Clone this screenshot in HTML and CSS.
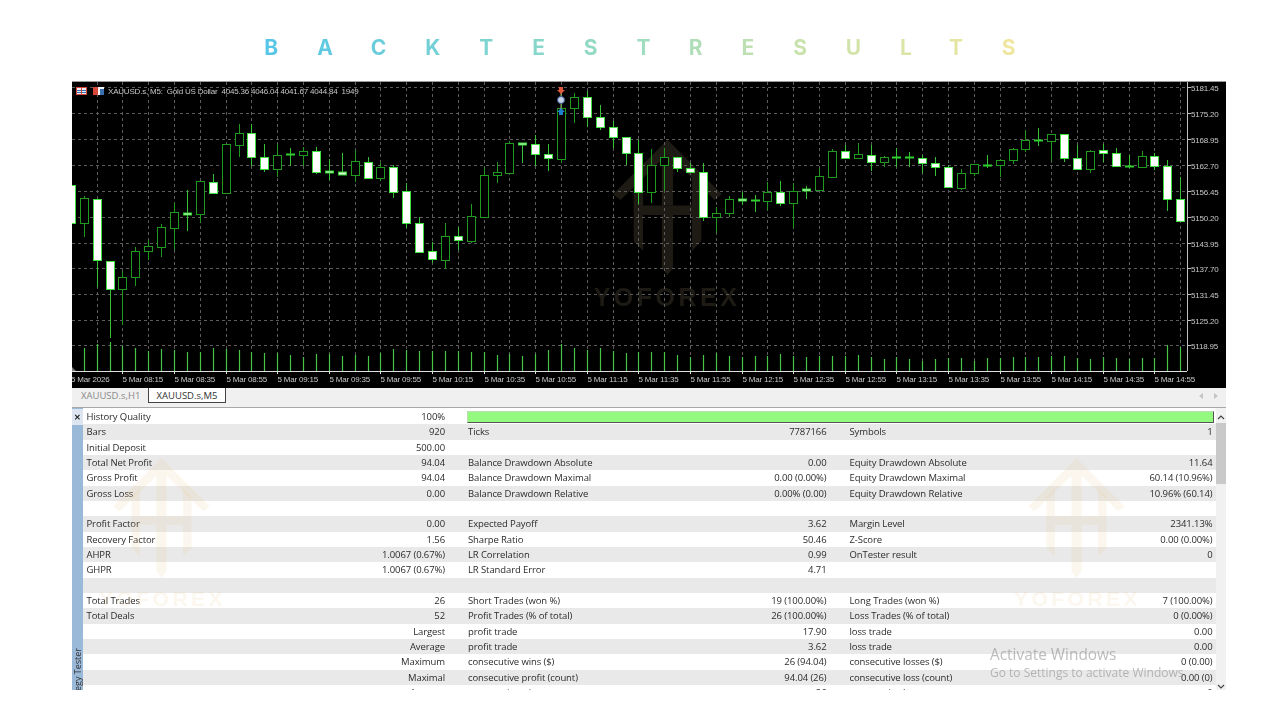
FILE: index.html
```html
<!DOCTYPE html>
<html lang="en">

<head>
    <meta charset="UTF-8">
    <meta name="viewport" content="width=device-width, initial-scale=1.0">
    <title>Backtest Results</title>
    <link rel="stylesheet" href="styles.css">
</head>

<body>
    <svg class="defs" aria-hidden="true">
        <symbol id="logo" viewBox="0 0 290 360">
            <polygon points="145,0 290,145 270,160 145,38 20,160 0,145" />
            <polygon points="55,115 80,90 80,175 210,175 210,90 235,115 235,270 210,295 210,200 160,200 160,340 145,360 130,340 130,200 80,200 80,295 55,270" />
            <polygon points="130,50 145,38 160,50 160,175 130,175" />
        </symbol>
    </svg>

    <h1 class="title"><span>BACKTEST RESULTS</span></h1>

    <div class="terminal">
        <div class="chart" id="chart"></div>

        <div class="tabs">
            <span class="tab">XAUUSD.s,H1</span>
            <span class="tab active">XAUUSD.s,M5</span>
            <span class="tab-arrows">
                <svg width="4" height="6" viewBox="0 0 4 6"><polygon points="4,0 0,3 4,6" /></svg>
                <svg width="4" height="6" viewBox="0 0 4 6"><polygon points="0,0 4,3 0,6" /></svg>
            </span>
        </div>

        <div class="tester">
            <div class="strip">
                <span class="close">&#10005;</span>
                <span class="strip-label">Strategy Tester</span>
            </div>

            <div class="report">
                <div class="row">
                    <div class="cell"><span>History Quality</span><span>100%</span></div>
                    <div class="quality"></div>
                </div>
                <div class="row">
                    <div class="cell"><span>Bars</span><span>920</span></div>
                    <div class="cell"><span>Ticks</span><span>7787166</span></div>
                    <div class="cell"><span>Symbols</span><span>1</span></div>
                </div>
                <div class="row">
                    <div class="cell"><span>Initial Deposit</span><span>500.00</span></div>
                </div>
                <div class="row">
                    <div class="cell"><span>Total Net Profit</span><span>94.04</span></div>
                    <div class="cell"><span>Balance Drawdown Absolute</span><span>0.00</span></div>
                    <div class="cell"><span>Equity Drawdown Absolute</span><span>11.64</span></div>
                </div>
                <div class="row">
                    <div class="cell"><span>Gross Profit</span><span>94.04</span></div>
                    <div class="cell"><span>Balance Drawdown Maximal</span><span>0.00 (0.00%)</span></div>
                    <div class="cell"><span>Equity Drawdown Maximal</span><span>60.14 (10.96%)</span></div>
                </div>
                <div class="row">
                    <div class="cell"><span>Gross Loss</span><span>0.00</span></div>
                    <div class="cell"><span>Balance Drawdown Relative</span><span>0.00% (0.00)</span></div>
                    <div class="cell"><span>Equity Drawdown Relative</span><span>10.96% (60.14)</span></div>
                </div>
                <div class="row"></div>
                <div class="row">
                    <div class="cell"><span>Profit Factor</span><span>0.00</span></div>
                    <div class="cell"><span>Expected Payoff</span><span>3.62</span></div>
                    <div class="cell"><span>Margin Level</span><span>2341.13%</span></div>
                </div>
                <div class="row">
                    <div class="cell"><span>Recovery Factor</span><span>1.56</span></div>
                    <div class="cell"><span>Sharpe Ratio</span><span>50.46</span></div>
                    <div class="cell"><span>Z-Score</span><span>0.00 (0.00%)</span></div>
                </div>
                <div class="row">
                    <div class="cell"><span>AHPR</span><span>1.0067 (0.67%)</span></div>
                    <div class="cell"><span>LR Correlation</span><span>0.99</span></div>
                    <div class="cell"><span>OnTester result</span><span>0</span></div>
                </div>
                <div class="row">
                    <div class="cell"><span>GHPR</span><span>1.0067 (0.67%)</span></div>
                    <div class="cell"><span>LR Standard Error</span><span>4.71</span></div>
                </div>
                <div class="row"></div>
                <div class="row">
                    <div class="cell"><span>Total Trades</span><span>26</span></div>
                    <div class="cell"><span>Short Trades (won %)</span><span>19 (100.00%)</span></div>
                    <div class="cell"><span>Long Trades (won %)</span><span>7 (100.00%)</span></div>
                </div>
                <div class="row">
                    <div class="cell"><span>Total Deals</span><span>52</span></div>
                    <div class="cell"><span>Profit Trades (% of total)</span><span>26 (100.00%)</span></div>
                    <div class="cell"><span>Loss Trades (% of total)</span><span>0 (0.00%)</span></div>
                </div>
                <div class="row">
                    <div class="cell"><span></span><span>Largest</span></div>
                    <div class="cell"><span>profit trade</span><span>17.90</span></div>
                    <div class="cell"><span>loss trade</span><span>0.00</span></div>
                </div>
                <div class="row">
                    <div class="cell"><span></span><span>Average</span></div>
                    <div class="cell"><span>profit trade</span><span>3.62</span></div>
                    <div class="cell"><span>loss trade</span><span>0.00</span></div>
                </div>
                <div class="row">
                    <div class="cell"><span></span><span>Maximum</span></div>
                    <div class="cell"><span>consecutive wins ($)</span><span>26 (94.04)</span></div>
                    <div class="cell"><span>consecutive losses ($)</span><span>0 (0.00)</span></div>
                </div>
                <div class="row">
                    <div class="cell"><span></span><span>Maximal</span></div>
                    <div class="cell"><span>consecutive profit (count)</span><span>94.04 (26)</span></div>
                    <div class="cell"><span>consecutive loss (count)</span><span>0.00 (0)</span></div>
                </div>
                <div class="row">
                    <div class="cell"><span></span><span>Average</span></div>
                    <div class="cell"><span>consecutive wins</span><span>26</span></div>
                    <div class="cell"><span>consecutive losses</span><span>0</span></div>
                </div>

                <!-- watermarks over the report -->
                <svg class="mark mark-left" viewBox="0 0 127 150">
                    <use href="#logo" x="14" y="0" width="97" height="120" />
                    <text x="63.5" y="148">YOFOREX</text>
                </svg>
                <svg class="mark mark-right" viewBox="0 0 127 150">
                    <use href="#logo" x="14" y="0" width="97" height="120" />
                    <text x="63.5" y="148">YOFOREX</text>
                </svg>

                <div class="activate">
                    <p class="activate-title">Activate Windows</p>
                    <p class="activate-note">Go to Settings to activate Windows.</p>
                </div>
            </div>

            <div class="scroll">
                <svg width="8" height="6" viewBox="0 0 8 6"><path d="M1 5 L4 2 L7 5" /></svg>
                <div class="thumb"></div>
                <svg class="scroll-down" width="8" height="6" viewBox="0 0 8 6"><path d="M1 1 L4 4 L7 1" /></svg>
            </div>
        </div>
    </div>

    <script src="chart.js"></script>
</body>

</html>
```

FILE: styles.css
```css
body {
    margin: 0;
    height: 720px;
    overflow: hidden;
    background-color: #fff;
    font-family: 'Open Sans', 'Liberation Sans', sans-serif;
}

.defs {
    display: none;
}

.title {
    display: flex;
    justify-content: center;
    align-items: center;
    height: 81px;
    margin: 0;
    padding-top: 13px;
    box-sizing: border-box;
    font-family: 'Inter', sans-serif;
    font-size: 21px;
    font-weight: 700;
    line-height: 1;
}

.title span {
    letter-spacing: 38.9px;
    margin-right: -38.9px;
    white-space: pre;
    word-spacing: -44.5px;
    background: linear-gradient(90deg, #55c6e8 0%, #8fd9c6 40%, #c5e2ae 65%, #f7e79c 100%);
    -webkit-background-clip: text;
    background-clip: text;
    color: transparent;
}

.terminal {
    width: 1154px;
    margin-left: 72px;
}

/* chart */
.chart {
    height: 307px;
    background-color: #000;
}

.chart svg {
    display: block;
    filter: blur(0.35px);
}

.chart text {
    font-family: 'Liberation Sans', Arial, sans-serif;
    font-size: 8px;
    letter-spacing: -0.2px;
    fill: #c8c8c8;
}

.chart .chart-mark {
    fill: #1e1a14;
}

.chart text.chart-mark-text {
    font-size: 25px;
    font-weight: 700;
    letter-spacing: 3.5px;
    fill: #1e1a14;
    text-anchor: middle;
}

/* tabs */
.tabs {
    display: flex;
    align-items: flex-start;
    height: 20px;
    padding-left: 9px;
    box-sizing: border-box;
    background-color: #f0f0f0;
    border-bottom: 1px solid #a8a8a8;
    font-size: 9.5px;
}

.tab {
    width: 57px;
    height: 15px;
    line-height: 16px;
    margin-right: 10px;
    color: #8a8a8a;
    white-space: nowrap;
}

.tab.active {
    width: 78px;
    box-sizing: border-box;
    background-color: #fff;
    border: 1px solid #444;
    border-top: 0;
    color: #333;
    line-height: 15px;
    text-align: center;
}

.tab-arrows {
    display: flex;
    gap: 11px;
    margin-left: auto;
    margin-right: 8px;
    padding-top: 5px;
}

.tab-arrows polygon {
    fill: #c4c4c4;
}

/* tester panel */
.tester {
    display: flex;
    height: 282px;
    overflow: hidden;
    filter: blur(0.25px);
}

.strip {
    position: relative;
    flex: 0 0 11px;
    background-color: #9ab8d8;
    overflow: hidden;
}

.close {
    display: block;
    height: 16px;
    background-color: #dde6f0;
    margin-top: 1px;
    color: #222;
    font-size: 8px;
    font-weight: 700;
    line-height: 16px;
    text-align: center;
}

.strip-label {
    position: absolute;
    left: 0;
    top: 240px;
    writing-mode: vertical-rl;
    transform: rotate(180deg);
    color: #333;
    font-size: 9px;
    line-height: 11px;
    white-space: nowrap;
}

.report {
    position: relative;
    flex: 1;
    display: grid;
    grid-auto-rows: 15.33px;
    padding-top: 1px;
    overflow: hidden;
    color: #2b2b2b;
    font-size: 9.5px;
    letter-spacing: -0.1px;
}

.row {
    display: grid;
    grid-template-columns: 358.5px 358.5px 363px;
    column-gap: 23px;
    align-items: center;
    padding-left: 3.5px;
    background-color: #fff;
}

.row:nth-child(even) {
    background-color: #e9e9e9;
}

.cell {
    display: flex;
    justify-content: space-between;
    white-space: nowrap;
}

.quality {
    grid-column: 2 / 4;
    height: 12px;
    margin-left: -1px;
    margin-right: -1px;
    background-color: #93f97f;
    border-right: 1px solid #555;
    border-bottom: 1px solid #555;
    border-top: 1px solid #b9dcb0;
    border-left: 1px solid #b9dcb0;
    box-sizing: border-box;
}

.mark {
    position: absolute;
    top: 50px;
    width: 127px;
    height: 150px;
    fill: rgba(235, 195, 135, 0.14);
}

.mark text {
    font-size: 21px;
    font-weight: 700;
    font-family: 'Liberation Sans', sans-serif;
    letter-spacing: 3.5px;
    text-anchor: middle;
}

.mark-left {
    left: 16px;
}

.mark-right {
    left: 931px;
}

.activate {
    position: absolute;
    left: 907px;
    top: 238px;
    color: rgba(125, 125, 125, 0.5);
    letter-spacing: 0;
    white-space: nowrap;
}

.activate p {
    margin: 0;
}

.activate-title {
    font-size: 15.4px;
    line-height: 18px;
}

.activate-note {
    font-size: 12px;
    line-height: 18px;
}

.scroll {
    display: flex;
    flex-direction: column;
    align-items: center;
    flex: 0 0 10px;
    background-color: #f1f1f1;
    padding-top: 6px;
    box-sizing: border-box;
}

.scroll svg {
    flex: none;
}

.scroll path {
    fill: none;
    stroke: #444;
    stroke-width: 1.2;
}

.thumb {
    flex: none;
    width: 100%;
    height: 61px;
    margin-top: 3px;
    background-color: #c9c9c9;
}

.scroll-down {
    margin-top: 200px;
}
```

FILE: chart.js
```js
// [kind, high, body top, body bottom, low] in page pixels
// w = falling candle (white), g = rising candle (black), d = doji
const candles = [
    ['w', 185, 185, 223, 223], ['g', 196, 198, 223, 237], ['w', 199, 199, 260, 287], ['w', 261, 261, 289, 338],
    ['g', 271, 277, 289, 325], ['g', 247, 251, 277, 286], ['g', 240, 246, 251, 260], ['g', 224, 227, 247, 257],
    ['g', 203, 212, 228, 250], ['d', 190, 213, 215, 231], ['g', 181, 181, 214, 223], ['w', 174, 182, 193, 193],
    ['g', 144, 144, 193, 194], ['g', 124, 133, 145, 157], ['w', 124, 133, 157, 166], ['w', 144, 157, 169, 172],
    ['g', 144, 155, 169, 177], ['d', 148, 154, 155, 166], ['g', 147, 151, 155, 166], ['w', 147, 151, 172, 174],
    ['d', 159, 171, 173, 180], ['d', 153, 172, 175, 175], ['g', 150, 161, 175, 182], ['w', 157, 162, 178, 178],
    ['g', 163, 167, 178, 181], ['w', 165, 167, 192, 198], ['w', 183, 191, 223, 228], ['w', 217, 223, 252, 252],
    ['w', 242, 251, 259, 263], ['g', 223, 236, 260, 269], ['w', 227, 236, 240, 250], ['g', 204, 216, 241, 243],
    ['g', 167, 175, 217, 217], ['g', 162, 172, 175, 183], ['g', 141, 143, 173, 173], ['d', 143, 143, 145, 163],
    ['w', 135, 144, 154, 166], ['w', 144, 154, 158, 171], ['g', 90, 108, 159, 163], ['g', 93, 97, 108, 123],
    ['w', 91, 97, 117, 127], ['w', 105, 117, 127, 130], ['w', 121, 127, 137, 148], ['w', 137, 137, 153, 165],
    ['w', 140, 153, 192, 204], ['g', 149, 165, 192, 203], ['g', 148, 157, 165, 191], ['w', 157, 157, 168, 172],
    ['w', 163, 168, 172, 172], ['w', 163, 172, 217, 221], ['g', 207, 213, 217, 233], ['g', 196, 199, 213, 217],
    ['d', 192, 199, 201, 205], ['d', 195, 200, 201, 212], ['g', 182, 192, 201, 210], ['w', 181, 192, 203, 206],
    ['g', 183, 191, 203, 228], ['d', 186, 189, 191, 199], ['g', 168, 176, 190, 190], ['g', 149, 151, 177, 177],
    ['w', 145, 151, 158, 158], ['g', 143, 154, 158, 159], ['w', 145, 155, 162, 171], ['g', 156, 157, 162, 167],
    ['d', 148, 157, 158, 167], ['d', 152, 157, 158, 167], ['w', 155, 158, 163, 173], ['w', 157, 163, 167, 176],
    ['w', 165, 167, 187, 187], ['g', 169, 173, 188, 190], ['g', 164, 164, 173, 176], ['d', 155, 165, 166, 168],
    ['g', 159, 160, 165, 177], ['g', 148, 149, 160, 164], ['g', 130, 140, 149, 152], ['d', 128, 140, 141, 146],
    ['g', 134, 134, 141, 161], ['w', 134, 134, 158, 162], ['w', 145, 158, 169, 170], ['g', 150, 151, 169, 173],
    ['w', 144, 150, 153, 162], ['w', 148, 153, 166, 167], ['d', 155, 166, 167, 168], ['g', 151, 156, 167, 168],
    ['w', 153, 156, 166, 170], ['w', 160, 166, 199, 211], ['w', 177, 199, 221, 221]
];

// top of each volume bar, same order as the candles
const volumes = [
    360, 348, 344, 342, 346, 348, 351, 349, 350, 352, 352, 348, 349, 350, 352, 353, 353, 355, 357, 354, 354, 356,
    355, 356, 353, 349, 350, 351, 351, 351, 351, 352, 352, 355, 354, 356, 354, 350, 344, 348, 350, 348, 351, 353,
    352, 352, 352, 355, 357, 355, 353, 356, 357, 356, 356, 354, 356, 357, 356, 356, 356, 355, 357, 359, 357, 359,
    361, 359, 358, 358, 361, 358, 358, 357, 357, 357, 356, 356, 358, 359, 357, 358, 359, 358, 358, 345, 347
];

const prices = [
    [5181.45, 87.5], [5175.20, 113.5], [5168.95, 139.5], [5162.70, 165.5], [5156.45, 191.5], [5150.20, 217.5],
    [5143.95, 243.5], [5137.70, 268.5], [5131.45, 294.5], [5125.20, 320.5], [5118.95, 345.5]
];

const times = [
    '08:15', '08:35', '08:55', '09:15', '09:35', '09:55', '10:15', '10:35', '10:55', '11:15', '11:35',
    '11:55', '12:15', '12:35', '12:55', '13:15', '13:35', '13:55', '14:15', '14:35', '14:55'
];

const BASE = 371;
const AXIS = 1187;
const px = i => Math.round(70.8 + 12.9 * i) + 0.5;

let out = '';

// watermark sits behind the grid and the candles
out += `<use href="#logo" class="chart-mark" x="613" y="138" width="109" height="139"/>`;
out += `<text class="chart-mark-text" x="667" y="306">YOFOREX</text>`;

// grid
for (const [, y] of prices) {
    out += `<line x1="72" x2="${AXIS}" y1="${y}" y2="${y}" stroke="#5c5c5c" stroke-dasharray="3 3"/>`;
}
for (let i = 2; i <= 86; i += 2) {
    out += `<line x1="${px(i)}" x2="${px(i)}" y1="82" y2="${BASE}" stroke="#5c5c5c" stroke-dasharray="3 3"/>`;
}

// volumes
volumes.forEach((top, i) => {
    if (i === 0) return;
    out += `<line x1="${px(i)}" x2="${px(i)}" y1="${top}" y2="${BASE}" stroke="#46c446" stroke-width="1.2"/>`;
});

// candles
candles.forEach(([kind, high, top, bottom, low], i) => {
    const x = px(i);
    const wick = kind === 'w' || kind === 'd' ? '#35c035' : '#1f9a1f';
    out += `<line x1="${x}" x2="${x}" y1="${high}" y2="${low}" stroke="${wick}"/>`;
    if (kind === 'd') {
        out += `<rect x="${x - 4}" y="${top}" width="8" height="${Math.max(bottom - top, 1)}" fill="#d8ffd0" stroke="#2fd02f"/>`;
    } else if (kind === 'w') {
        out += `<rect x="${x - 4}" y="${top + 0.5}" width="8" height="${bottom - top}" fill="#fff" stroke="#3fe03f"/>`;
    } else {
        out += `<rect x="${x - 4}" y="${top + 0.5}" width="8" height="${bottom - top}" fill="#000" stroke="#1f9a1f"/>`;
    }
});

// trade markers on the spike candle
out += `<line x1="561" x2="561" y1="90" y2="112" stroke="#b0a080"/>`;
out += `<polygon points="559,87 563,87 563,90 565,90 561,94 557,90 559,90" fill="#e2583a"/>`;
out += `<circle cx="561" cy="100" r="3.5" fill="#c8d4e6" stroke="#3a5a9a"/>`;
out += `<polygon points="561,108 565,112 563,112 563,115 559,115 559,112 557,112" fill="#1f7fc8"/>`;

// axes
out += `<line x1="72" x2="1226" y1="81.5" y2="81.5" stroke="#9a9a9a"/>`;
out += `<line x1="${AXIS + 0.5}" x2="${AXIS + 0.5}" y1="82" y2="${BASE}" stroke="#c0c0c0"/>`;
out += `<line x1="72" x2="${AXIS}" y1="${BASE + 0.5}" y2="${BASE + 0.5}" stroke="#e0e0e0"/>`;
out += `<polygon points="72,367 76,371 72,371" fill="#777"/>`;

for (const [price, y] of prices) {
    out += `<line x1="${AXIS}" x2="${AXIS + 4}" y1="${y}" y2="${y}" stroke="#c0c0c0"/>`;
    out += `<text x="1191" y="${y + 3}">${price.toFixed(2)}</text>`;
}

out += `<text x="71" y="382">5 Mar 2026</text>`;
times.forEach((time, i) => {
    const x = px((i + 1) * 4);
    out += `<line x1="${x}" x2="${x}" y1="${BASE}" y2="${BASE + 3}" stroke="#e0e0e0"/>`;
    out += `<text x="${x}" y="382">5 Mar ${time}</text>`;
});

// chart header: window icons and quote line
out += `<rect x="76.5" y="87.5" width="10" height="7" fill="#e8f0f8" stroke="#d8483a"/>`;
out += `<path d="M81.5 88 V94" stroke="#d8483a"/>`;
out += `<path d="M77 90.5 H81 M82 90.5 H86 M77 92.5 H81 M82 92.5 H86" stroke="#3a70b0"/>`;
out += `<rect x="93" y="87" width="5" height="8" fill="#d8483a"/>`;
out += `<rect x="98" y="87" width="6" height="8" fill="#f4f4f4"/>`;
out += `<rect x="100" y="89" width="4" height="6" fill="#3a70b0"/>`;
out += `<text x="108" y="94" xml:space="preserve">XAUUSD.s, M5:  Gold US Dollar  4045.36 4046.04 4041.67 4044.84  1949</text>`;

document.getElementById('chart').innerHTML =
    `<svg width="1154" height="307" viewBox="72 81 1154 307">${out}</svg>`;
```
